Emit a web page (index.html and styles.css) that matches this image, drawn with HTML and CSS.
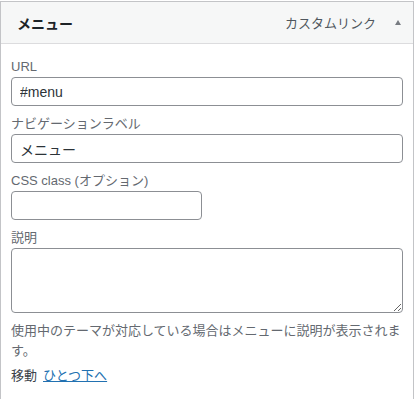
FILE: index.html
```html
<!DOCTYPE html>
<html lang="ja">
<head>
<meta charset="utf-8">
<link rel="stylesheet" href="styles.css">
</head>
<body>
<div class="panel">
  <div class="head">
    <span class="title">メニュー</span>
    <span class="meta">
      <span class="type">カスタムリンク</span>
      <span class="arrow"></span>
    </span>
  </div>
  <div class="settings">
    <label class="field">
      <span class="lbl">URL</span>
      <input class="input wide" type="text" value="#menu">
    </label>
    <label class="field">
      <span class="lbl">ナビゲーションラベル</span>
      <input class="input wide" type="text" value="メニュー">
    </label>
    <label class="field">
      <span class="lbl">CSS class (オプション)</span>
      <input class="input thin" type="text" value="">
    </label>
    <label class="field">
      <span class="lbl">説明</span>
      <textarea class="textarea"></textarea>
    </label>
    <p class="help">使用中のテーマが対応している場合はメニューに説明が表示されます。</p>
    <p class="move">移動<a class="link" href="#">ひとつ下へ</a></p>
  </div>
</div>
</body>
</html>
```
FILE: styles.css
```css
* { box-sizing: border-box; }
html, body { margin: 0; padding: 0; background: #fff; }
body {
  font-family: "Liberation Sans", "Noto Sans CJK JP", sans-serif;
  font-size: 13px;
  color: #3c434a;
}
.panel {
  width: 414px;
  margin-top: 1px;
  border: 1px solid #c3c4c7;
  border-bottom: none;
  height: 398px;
}
.head {
  height: 42px;
  background: #f6f7f7;
  border-bottom: 1px solid #dcdcde;
  display: flex;
  align-items: center;
  justify-content: space-between;
  padding: 0 12px 0 16px;
}
.title {
  font-weight: bold;
  font-size: 14px;
  color: #1d2327;
}
.meta { display: flex; align-items: center; }
.type { color: #50575e; font-size: 13px; }
.arrow {
  width: 0; height: 0;
  margin-left: 19px;
  border-left: 3.5px solid transparent;
  border-right: 3.5px solid transparent;
  border-bottom: 5px solid #787c82;
}
.settings { padding: 13px 10px 0 10px; }
.field { display: block; margin-bottom: 8px; }
.lbl {
  display: block;
  line-height: 20px;
  color: #646970;
}
.input {
  display: block;
  height: 29px;
  border: 1px solid #8c8f94;
  border-radius: 4px;
  padding: 0 8px;
  font-family: "Liberation Sans", "Noto Sans CJK JP", sans-serif;
  font-size: 14px;
  color: #2c3338;
  background: #fff;
  margin: 0;
}
.wide { width: 392px; }
.thin { width: 191px; }
.textarea {
  display: block;
  width: 392px;
  height: 65px;
  border: 1px solid #8c8f94;
  border-radius: 4px;
  margin: 0;
  padding: 2px 6px;
  font-size: 14px;
  resize: both;
}
.help {
  margin: 2px 0 0;
  line-height: 20px;
  color: #646970;
}
.move {
  margin: 5px 0 0;
  line-height: 20px;
  color: #3c434a;
}
.link {
  margin-left: 6px;
  color: #2271b1;
  text-decoration: underline;
}
```
